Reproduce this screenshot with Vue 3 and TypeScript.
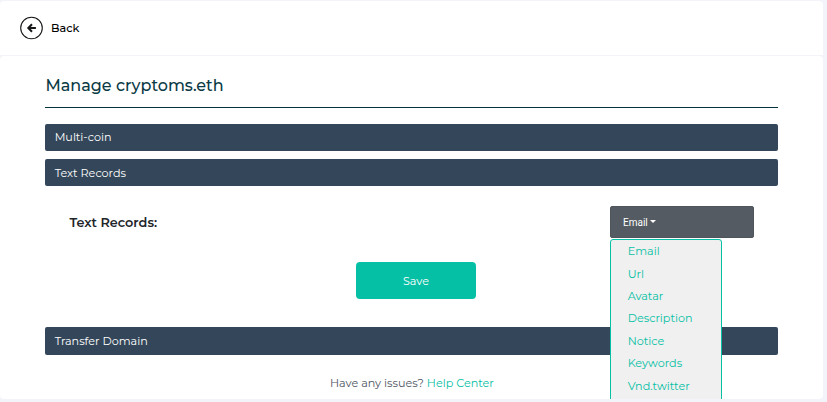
<script setup lang="ts">
import { ref } from 'vue'

const options: string[] = ['Email', 'Url', 'Avatar', 'Description', 'Notice', 'Keywords', 'Vnd.twitter']

const open = ref(true)
const selected = ref('Email')

function choose(label: string) {
  selected.value = label
  open.value = false
}
</script>

<template>
  <div class="page">
    <header class="topbar">
      <button class="back" type="button">
        <svg class="back-icon" viewBox="0 0 24 24" width="24" height="24" aria-hidden="true">
          <circle cx="11.5" cy="12" r="10.8" fill="#fff" stroke="#161719" stroke-width="1.1" />
          <path d="M12 8.2 8.3 12l3.7 3.8M8.6 12h7.3" fill="none" stroke="#161719" stroke-width="2" />
        </svg>
        <span class="back-label">Back</span>
      </button>
    </header>

    <main class="card">
      <h1 class="title">Manage cryptoms.eth</h1>
      <div class="bar">Multi-coin</div>
      <div class="bar expanded">Text Records</div>

      <section class="records">
        <span class="records-label">Text Records:</span>
        <div class="dropdown">
          <button class="toggle" type="button" @click="open = !open">
            <span>{{ selected }}</span><i class="caret"></i>
          </button>
          <ul v-if="open" class="menu">
            <li v-for="o in options" :key="o" @click="choose(o)">{{ o }}</li>
          </ul>
        </div>
      </section>

      <button class="save" type="button">Save</button>
      <div class="bar transfer">Transfer Domain</div>
      <p class="help">Have any issues? <a class="help-link">Help Center</a></p>
    </main>
  </div>
</template>

<style>
body {
  background: #f3f3fa;
  overflow: hidden;
}
</style>

<style scoped>
* {
  box-sizing: border-box;
}
.page {
  height: 402px;
  padding: 1px 4px 3px 0;
  display: flex;
  flex-direction: column;
  gap: 1px;
  background: #f3f3fa;
  font-family: Montserrat, Inter, sans-serif;
  font-size: 11.2px;
  overflow: hidden;
}
button {
  border: 0;
  margin: 0;
  padding: 0;
  font: inherit;
  text-align: left;
  cursor: pointer;
}
.topbar {
  height: 54px;
  flex: none;
  padding-left: 20px;
  display: flex;
  align-items: center;
  background: #fff;
  border-radius: 4px 4px 0 0;
}
.back {
  display: flex;
  align-items: center;
  gap: 7px;
  background: none;
  color: #000;
  font-weight: 500;
}
.back-icon {
  display: block;
}
.card {
  height: 343px;
  flex: none;
  padding: 0 45px;
  display: flex;
  flex-direction: column;
  background: #fff;
  border-radius: 4px;
  overflow: hidden;
}
.title {
  flex: none;
  height: 52px;
  margin: 0 0 16px;
  padding: 19px 0 0 0.5px;
  border-bottom: 1px solid #04333b;
  color: #0a3a45;
  font-size: 16px;
  font-weight: 500;
  line-height: 21px;
}
.bar {
  flex: none;
  height: 27px;
  margin-bottom: 8px;
  padding-left: 9.7px;
  border-radius: 2px;
  background: #34475a;
  color: #fff;
  line-height: 27px;
}
.bar.expanded {
  line-height: 29px;
}
.records {
  flex: none;
  height: 32px;
  margin-top: 12px;
  padding: 0 24px 0 24.4px;
  display: flex;
  justify-content: space-between;
  align-items: center;
}
.records-label {
  color: #212529;
  font-size: 12.8px;
  font-weight: 600;
}
.dropdown {
  position: relative;
  width: 144px;
  height: 32px;
}
.toggle {
  width: 100%;
  height: 100%;
  padding-left: 12px;
  display: flex;
  align-items: center;
  gap: 2px;
  border: 1px solid #4e555b;
  border-radius: 2px;
  background: #545b62;
  color: #fff;
  font-family: Roboto, sans-serif;
  font-size: 10px;
}
.caret {
  margin-top: -2px;
  border: 3px solid transparent;
  border-top-color: #fff;
  border-bottom: 0;
}
.menu {
  position: absolute;
  z-index: 2;
  top: 33px;
  left: 0;
  width: 112px;
  height: 190px;
  margin: 0;
  padding: 0 0 0 16.7px;
  border: 1px solid #05c0a5;
  border-radius: 3px;
  background: #f0f0f0;
  color: #05c0a5;
  list-style: none;
}
.menu li {
  height: 22.45px;
  line-height: 23px;
  white-space: nowrap;
  cursor: pointer;
}
.menu li:nth-child(2) {
  line-height: 25px;
}
.save {
  flex: none;
  align-self: center;
  width: 120px;
  height: 37px;
  margin: 24px 0 28px 9px;
  border-radius: 4px;
  background: #05c0a5;
  color: #fff;
  text-align: center;
}
.bar.transfer {
  height: 28px;
  margin-bottom: 19px;
  line-height: 28px;
}
.help {
  margin: 0;
  padding-left: 285px;
  color: #4f5665;
  line-height: 18px;
}
.help-link {
  color: #05c0a5;
}
</style>
